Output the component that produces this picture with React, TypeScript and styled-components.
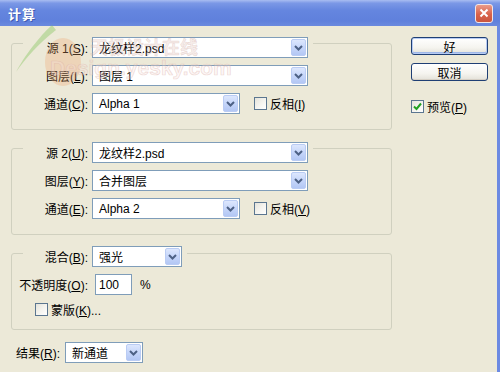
import React from "react";
import styled, { createGlobalStyle } from "styled-components";

const Global = createGlobalStyle`
  html, body { margin: 0; padding: 0; background: #ECE9D8; }
  body {
    font-family: "Liberation Sans", "Noto Sans CJK SC", sans-serif;
    font-size: 12px;
    color: #000;
  }
  #root { width: 500px; height: 372px; }
`;

const Window = styled.div`
  position: relative;
  width: 500px;
  height: 372px;
  overflow: hidden;
  background: #ECE9D8;
  display: flex;
  flex-direction: column;
`;

const TitleBar = styled.div`
  height: 26px;
  flex: none;
  display: flex;
  align-items: center;
  justify-content: space-between;
  padding: 0 6px 0 8px;
  background: linear-gradient(180deg, #A9BDF1 0%, #7B98E6 12%, #6586DF 40%, #5F80DC 80%, #6A89DE 100%);
`;

const Title = styled.span`
  color: #fff;
  font-family: "Noto Sans CJK SC", sans-serif;
  font-weight: 700;
  font-size: 13px;
  letter-spacing: 1px;
  text-shadow: 1px 1px 0 rgba(20, 40, 120, 0.45);
`;

const CloseBtn = styled.div`
  width: 16px;
  height: 17px;
  border: 1px solid #F3E6E6;
  border-radius: 3px;
  background: linear-gradient(180deg, #E99B8A 0%, #D9624A 55%, #C9553E 100%);
  display: flex;
  align-items: center;
  justify-content: center;
  margin-right: 1px;
`;

const Body = styled.div`
  flex: 1;
  display: flex;
  border-right: 3px solid #6C8AE2;
`;

const LeftCol = styled.div`
  width: 381px;
  margin-left: 11px;
  padding-top: 17px;
  display: flex;
  flex-direction: column;
`;

const Group = styled.div<{ $mt: number; $pb: number }>`
  margin-top: ${(p) => p.$mt}px;
  border: 1px solid #D0D0BF;
  border-radius: 3px;
  padding-bottom: ${(p) => p.$pb}px;
  display: flex;
  flex-direction: column;
`;

const Row = styled.div<{ $mt?: number; $pl?: number; $h?: number }>`
  display: flex;
  align-items: center;
  gap: 4px;
  height: ${(p) => p.$h ?? 21}px;
  margin-top: ${(p) => p.$mt ?? 0}px;
  padding-left: ${(p) => p.$pl ?? 0}px;
`;

const HeaderRow = styled(Row)`
  align-self: flex-start;
  margin-left: 11px;
  padding-right: 5px;
  background: #ECE9D8;
`;

const Label = styled.span<{ $w?: number }>`
  width: ${(p) => (p.$w ? `${p.$w}px` : "auto")};
  flex: none;
  text-align: right;
  white-space: nowrap;
  font-size: 12px;
`;

const U = styled.span`
  text-decoration: underline;
  text-underline-offset: 1px;
`;

const SelectBox = styled.div<{ $w: number }>`
  width: ${(p) => p.$w}px;
  height: 21px;
  box-sizing: border-box;
  border: 1px solid #7F9DB9;
  background: #fff;
  display: flex;
  align-items: center;
  padding: 1px;
  flex: none;
`;

const SelectText = styled.span`
  flex: 1;
  padding-left: 5px;
  white-space: nowrap;
  overflow: hidden;
`;

const ArrowBtn = styled.span`
  width: 15px;
  height: 17px;
  box-sizing: border-box;
  border: 1px solid #BACCF4;
  border-radius: 2px;
  background: linear-gradient(180deg, #DDE7FD 0%, #C6D6FA 50%, #B3C7F4 100%);
  display: flex;
  align-items: center;
  justify-content: center;
`;

const TextInput = styled.div`
  width: 37px;
  height: 21px;
  box-sizing: border-box;
  border: 1px solid #7F9DB9;
  background: #fff;
  margin-left: 3px;
  padding-left: 3px;
  display: flex;
  align-items: center;
`;

const Percent = styled.span`
  margin-left: 4px;
`;

const CheckWrap = styled.span<{ $ml?: number; $mt?: number }>`
  display: inline-flex;
  align-items: center;
  gap: 3px;
  margin-left: ${(p) => p.$ml ?? 0}px;
  margin-top: ${(p) => p.$mt ?? 0}px;
  white-space: nowrap;
`;

const Box = styled.span`
  width: 13px;
  height: 13px;
  box-sizing: border-box;
  border: 1px solid #5B7690;
  background: linear-gradient(135deg, #E4E3DB 0%, #F4F3EE 50%, #FFFFFF 100%);
  display: inline-flex;
  align-items: center;
  justify-content: center;
  flex: none;
`;

const RightCol = styled.div`
  flex: 1;
  padding: 11px 0 0 19px;
  display: flex;
  flex-direction: column;
  align-items: flex-start;
`;

const Button = styled.div<{ $default?: boolean; $mt?: number }>`
  width: 77px;
  height: 18px;
  box-sizing: border-box;
  margin-top: ${(p) => p.$mt ?? 0}px;
  border: 1px solid #1F3F74;
  border-radius: 3px;
  background: linear-gradient(180deg, #FFFFFF 0%, #F5F4EF 60%, #E3E1D8 100%);
  box-shadow: ${(p) =>
    p.$default ? "inset 0 0 0 1px #B7CBF3, inset 0 -1px 0 1px #9EB7E8" : "inset 0 -1px 0 #D6D0C5"};
  display: flex;
  align-items: center;
  justify-content: center;
  font-size: 12px;
`;

const ResultRow = styled(Row)`
  margin-top: 12px;
  padding-left: 5px;
  gap: 5px;
`;

const Watermark = styled.div`
  position: absolute;
  left: 0;
  top: 0;
  width: 500px;
  height: 120px;
  pointer-events: none;
`;

const WmLogo = styled.svg`
  position: absolute;
  left: 8px;
  top: 22px;
`;

const WmCn = styled.span`
  position: absolute;
  left: 90px;
  top: 33px;
  font-family: "Noto Sans CJK SC", sans-serif;
  font-weight: 700;
  font-size: 18px;
  color: rgba(220, 190, 180, 0.28);
  -webkit-text-stroke: 0.5px rgba(200, 150, 140, 0.35);
  white-space: nowrap;
`;

const WmEn = styled.span`
  position: absolute;
  left: 50px;
  top: 56px;
  font-family: "Liberation Sans", sans-serif;
  font-weight: 700;
  font-size: 21px;
  color: rgba(245, 225, 220, 0.3);
  -webkit-text-stroke: 0.7px rgba(215, 165, 155, 0.4);
  white-space: nowrap;
`;

const Chevron = () => (
  <svg width="9" height="6" viewBox="0 0 9 6">
    <path d="M1 1 L4.5 4.5 L8 1" fill="none" stroke="#4D6185" strokeWidth="2" />
  </svg>
);

const CheckMark = () => (
  <svg width="9" height="9" viewBox="0 0 9 9">
    <path d="M1 4.5 L3.5 7 L8 1.5" fill="none" stroke="#21A121" strokeWidth="2" />
  </svg>
);

const Select: React.FC<{ w: number; value: string }> = ({ w, value }) => (
  <SelectBox $w={w}>
    <SelectText>{value}</SelectText>
    <ArrowBtn>
      <Chevron />
    </ArrowBtn>
  </SelectBox>
);

const Check: React.FC<{ checked?: boolean; ml?: number; mt?: number; children: React.ReactNode }> = ({
  checked,
  ml,
  mt,
  children,
}) => (
  <CheckWrap $ml={ml} $mt={mt}>
    <Box>{checked && <CheckMark />}</Box>
    <span>{children}</span>
  </CheckWrap>
);

export default function App() {
  return (
    <>
      <Global />
      <Window>
        <TitleBar>
          <Title>计算</Title>
          <CloseBtn>
            <svg width="10" height="10" viewBox="0 0 10 10">
              <path d="M1.5 1.5 L8.5 8.5 M8.5 1.5 L1.5 8.5" stroke="#fff" strokeWidth="2" />
            </svg>
          </CloseBtn>
        </TitleBar>
        <Body>
          <LeftCol>
            <Group $mt={0} $pb={15}>
              <HeaderRow $mt={-7}>
                <Label $w={65}>
                  源 1(<U>S</U>):
                </Label>
                <Select w={216} value="龙纹样2.psd" />
              </HeaderRow>
              <Row $mt={7}>
                <Label $w={76}>
                  图层(<U>L</U>):
                </Label>
                <Select w={216} value="图层 1" />
              </Row>
              <Row $mt={7}>
                <Label $w={76}>
                  通道(<U>C</U>):
                </Label>
                <Select w={148} value="Alpha 1" />
                <Check ml={10}>
                  反相(<U>I</U>)
                </Check>
              </Row>
            </Group>

            <Group $mt={18} $pb={15}>
              <HeaderRow $mt={-7}>
                <Label $w={65}>
                  源 2(<U>U</U>):
                </Label>
                <Select w={216} value="龙纹样2.psd" />
              </HeaderRow>
              <Row $mt={7}>
                <Label $w={76}>
                  图层(<U>Y</U>):
                </Label>
                <Select w={216} value="合并图层" />
              </Row>
              <Row $mt={7}>
                <Label $w={76}>
                  通道(<U>E</U>):
                </Label>
                <Select w={148} value="Alpha 2" />
                <Check ml={10}>
                  反相(<U>V</U>)
                </Check>
              </Row>
            </Group>

            <Group $mt={18} $pb={12}>
              <HeaderRow $mt={-8}>
                <Label $w={65}>
                  混合(<U>B</U>):
                </Label>
                <Select w={90} value="强光" />
              </HeaderRow>
              <Row $mt={7}>
                <Label $w={76}>
                  不透明度(<U>O</U>):
                </Label>
                <TextInput>100</TextInput>
                <Percent>%</Percent>
              </Row>
              <Row $mt={7} $pl={23} $h={15}>
                <Check>
                  蒙版(<U>K</U>)...
                </Check>
              </Row>
            </Group>

            <ResultRow>
              <Label>
                结果(<U>R</U>):
              </Label>
              <Select w={78} value="新通道" />
            </ResultRow>
          </LeftCol>

          <RightCol>
            <Button $default>好</Button>
            <Button $mt={8}>取消</Button>
            <Check checked mt={17}>
              预览(<U>P</U>)
            </Check>
          </RightCol>
        </Body>

        <Watermark>
          <WmLogo width="80" height="70" viewBox="0 0 80 70">
            <path
              d="M44 3 C36 10 20 28 8 50 C18 36 30 22 48 8 Z"
              fill="rgba(130, 195, 90, 0.4)"
            />
            <ellipse cx="55" cy="40" rx="18" ry="24" fill="rgba(238, 165, 110, 0.3)" />
          </WmLogo>
          <WmCn>天极设计在线</WmCn>
          <WmEn>Design.yesky.com</WmEn>
        </Watermark>
      </Window>
    </>
  );
}
